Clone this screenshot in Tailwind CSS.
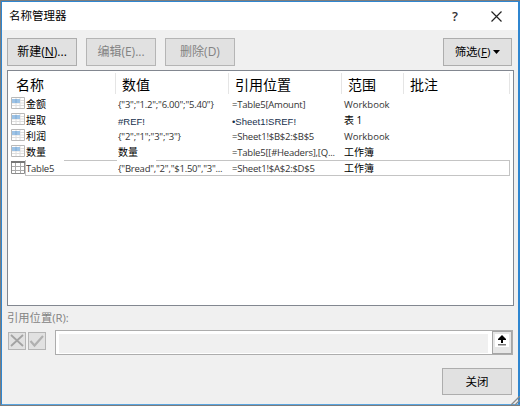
<!DOCTYPE html>
<html lang="zh-CN">
<head>
  <meta charset="UTF-8" />
  <title>名称管理器</title>
  <script src="https://cdn.jsdelivr.net/npm/@tailwindcss/browser@4"></script>
</head>
<body class="w-[520px] h-[406px] overflow-hidden bg-[#7d7d7d] pt-px pl-px pb-px font-['Open_Sans','Noto_Sans_CJK_SC',sans-serif] text-black">
  <div class="relative w-[519px] h-[404px] flex flex-col bg-[#f0f0f0] border border-r-2 border-[#2f86d0] border-b-[#5aa5e0]">

    <!-- Title bar -->
    <header class="h-7 flex items-center bg-white pl-[7px] pr-4 text-[11.5px] leading-7">
      <h1 class="flex-1">名称管理器</h1>
      <span class="w-3 mr-[30px] text-center text-[13px] font-semibold text-[#333]">?</span>
      <svg class="w-[11px] h-[11px]" viewBox="0 0 11 11" fill="none" stroke="#222" stroke-width="1.2"><path d="M.5.5l10 10M10.500.5l-10 10" /></svg>
    </header>

    <!-- Toolbar -->
    <div class="h-10 flex gap-[9px] pt-2 pl-[5px] pr-[6px] text-xs">
      <button class="w-[70px] h-7 border border-[#adadad] bg-[#e1e1e1] whitespace-nowrap">新建(<u>N</u>)...</button>
      <button class="w-[70px] h-7 border border-[#b5b5b5] bg-[#e1e1e1] whitespace-nowrap text-[#838383]">编辑(E)...</button>
      <button class="w-[70px] h-7 border border-[#b5b5b5] bg-[#e1e1e1] whitespace-nowrap text-[#838383]">删除(D)</button>
      <button class="w-[69px] h-7 ml-auto flex items-center justify-center gap-[3px] border border-[#adadad] bg-[#e1e1e1] whitespace-nowrap text-[11.5px]">
        <span>筛选(<u>F</u>)</span>
        <svg class="w-[7px] h-1" viewBox="0 0 7 4"><path d="M0 0h7L3.500 4z" /></svg>
      </button>
    </div>

    <!-- Name list -->
    <div class="w-[507px] h-[236px] ml-[5px] border border-[#828790] bg-white">
      <div class="h-[26px] pt-0.5 grid grid-cols-[108px_113px_113px_62px_106px] text-[14px] leading-[23px]">
        <div class="h-[21px] pl-[8px] border-r border-[#e5e5e5]">名称</div>
        <div class="h-[21px] pl-[6px] border-r border-[#e5e5e5]">数值</div>
        <div class="h-[21px] pl-[6px] border-r border-[#e5e5e5]">引用位置</div>
        <div class="h-[21px] pl-[6px] border-r border-[#e5e5e5]">范围</div>
        <div class="h-[21px] pl-[6px] border-r border-[#e5e5e5]">批注</div>
      </div>

      <div id="rows" class="text-[9.500px] leading-4 text-[#333] whitespace-nowrap"></div>
    </div>

    <!-- Refers to -->
    <p class="h-[23px] pl-[5px] text-[11.300px] leading-[23px] text-[#838383]">引用位置(R):</p>
    <div class="h-[26px] flex items-center pl-[6px] pr-[5px]">
      <div class="w-[18px] h-[18px] mb-0.5 mr-0.5 border border-[#b5b5b5] bg-[#e1e1e1]">
        <svg viewBox="0 0 16 16" fill="none" stroke="#a3a3a3" stroke-width="1.800"><path d="M2 2l12 11M14 2L2 13" /></svg>
      </div>
      <div class="w-[18px] h-[18px] mb-0.5 mr-[9px] border border-[#b5b5b5] bg-[#e1e1e1]">
        <svg viewBox="0 0 16 16" fill="none" stroke="#b0b0b0" stroke-width="2.200"><path d="M1.500 8l4 4.500L14 3" /></svg>
      </div>
      <div class="flex-1 h-[25px] flex border border-[#adadad] bg-white">
        <div class="flex-1 ml-[3px] mr-1 mt-[3px] mb-px bg-[#f0f0f0]"></div>
        <button class="w-5 h-[23px] border border-[#a5a5a5] bg-[#e6e6e6] px-0.5 pb-1">
          <svg class="w-3.5 h-[13px] bg-white" viewBox="0 0 14 13"><path d="M7 1l4 4v1H8v3H6V6H3V5z" /><path d="M3 10h8v1.500H3z" fill="#777" /></svg>
        </button>
      </div>
    </div>

    <button class="w-[70px] h-[27px] ml-auto mr-[6px] mt-[13px] border border-[#adadad] bg-[#e1e1e1] text-[11.5px]">关闭</button>

    <!-- Resize grip -->
    <svg class="absolute -right-0.5 -bottom-px w-[9px] h-[9px]" viewBox="0 0 9 9" fill="none" stroke="#8a8a8a" stroke-width="1.300"><path d="M0 9l9-9M4 9l5-5" /></svg>
  </div>

  <!-- Row icons -->
  <template id="nameIcon">
    <svg class="w-[14px] h-3" viewBox="0 0 14 12"><path d="M.5.5h13v11H.5z" fill="#fff" stroke="#b9b9b9" /><path d="M5 1v10M9 1v10M1 3.500h12M1 6h12M1 8.500h12" stroke="#dedede" /><path d="M1 2h8v4H1z" fill="#9dc3e6" /><path d="M5 2v4" stroke="#7fabd6" /></svg>
  </template>
  <template id="tableIcon">
    <svg class="w-[14px] h-[13px]" viewBox="0 0 14 13"><path d="M.5.5h13v12H.5z" fill="#fff" stroke="#8c8c8c" /><path d="M0 0h14v2H0z" fill="#777" /><path d="M4.500 2v10M9.500 2v10M1 5.500h12M1 9.500h12" stroke="#aaa" fill="none" /></svg>
  </template>

  <script>
    const rows = [
      ["金额", '{"3";"1.2";"6.00";"5.40"}', "=Table5[Amount]", "Workbook"],
      ["提取", "#REF!", "•Sheet1!SREF!", "表 1"],
      ["利润", '{"2";"1";"3";"3"}', "=Sheet1!$B$2:$B$5", "Workbook"],
      ["数量", "数量", "=Table5[[#Headers],[Q...", "工作簿"],
      ["Table5", '{"Bread","2","$1.50","3"...', "=Sheet1!$A$2:$D$5", "工作簿"],
    ];
    const list = document.getElementById("rows");

    rows.forEach((row, i) => {
      const line = document.createElement("div");
      line.className = "relative h-4 grid grid-cols-[18px_92px_114px_112px_1fr]";
      const icon = document.createElement("div");
      icon.className = "pl-[3px]";
      icon.append(document.getElementById(i === 4 ? "tableIcon" : "nameIcon").content.cloneNode(true));
      line.append(icon);
      row.forEach((text) => {
        const cell = document.createElement("div");
        cell.textContent = text;
        if (/[\u4e00-\u9fff]/.test(text)) cell.className = "text-black text-[10px] leading-[15px]";
        else if (i === 1) cell.className = "font-['Liberation_Sans'] text-[9.500px] leading-[17px] text-[#16304d]";
        else if (text !== "Workbook") cell.className = "tracking-[-0.22px]";
        line.append(cell);
      });
      if (i === 4) {
        // focus rectangle, open along the top beside the name cells
        const box = document.createElement("div");
        box.className = "absolute left-[17px] right-[3px] -top-px h-4 border border-t-0 border-[#c4c4c4]";
        const topLeft = document.createElement("div");
        topLeft.className = "absolute left-[56px] w-[53px] -top-px h-px bg-[#c4c4c4]";
        const topRight = document.createElement("div");
        topRight.className = "absolute left-[148px] right-[3px] -top-px h-px bg-[#c4c4c4]";
        line.append(box, topLeft, topRight);
      }
      list.append(line);
    });
  </script>
</body>
</html>
